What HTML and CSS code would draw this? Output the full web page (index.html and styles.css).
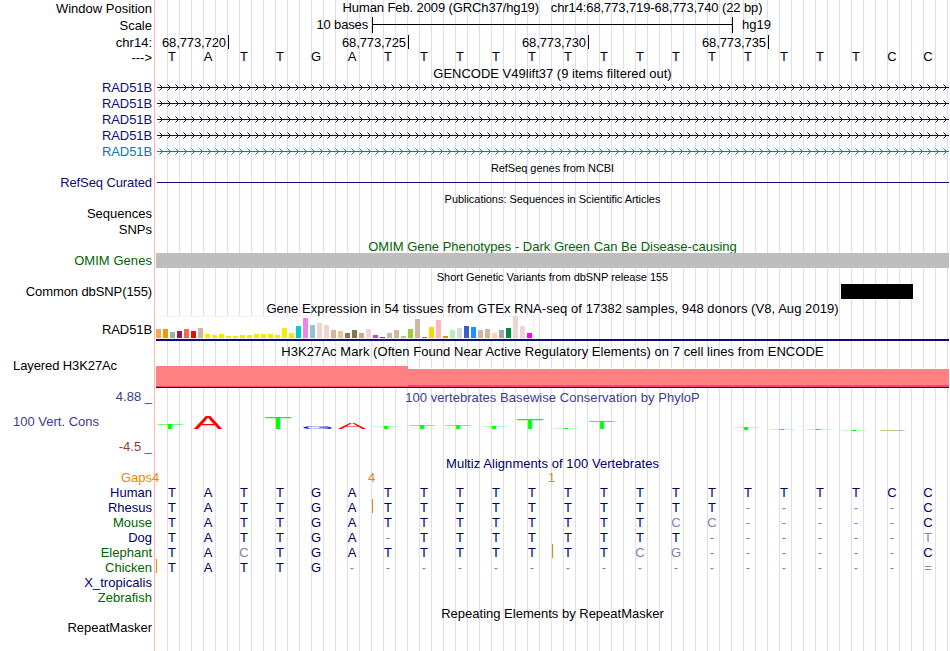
FILE: index.html
```html
<!DOCTYPE html>
<html lang="en">
<head>
  <meta charset="UTF-8" />
  <meta name="viewport" content="width=device-width, initial-scale=1.0" />
  <title>chr14:68,773,719-68,773,740</title>
  <link rel="stylesheet" href="styles.css">
</head>
<body>
  <div class="browser">
    <div class="row tall">
      <div class="label low">Window Position</div>
      <div class="title position"><span>Human Feb. 2009 (GRCh37/hg19)</span><span>chr14:68,773,719-68,773,740 (22 bp)</span></div>
    </div>
    <div class="row tall">
      <div class="label low">Scale</div>
      <div class="scale">
        <span class="scale-size">10 bases</span>
        <span class="ruler"></span>
        <span>hg19</span>
      </div>
    </div>
    <div class="row">
      <div class="label low">chr14:</div>
      <div class="ticks">
        <span>68,773,720</span><span>68,773,725</span><span>68,773,730</span><span>68,773,735</span>
      </div>
    </div>
    <div class="row gene-row">
      <div class="label low">---&gt;</div>
      <div class="seq" data-seq="TATTGATTTTTTTTTTTTTTCC"></div>
    </div>

    <div class="row"><div class="title low">GENCODE V49lift37 (9 items filtered out)</div></div>
    <div class="row gene-row navy"><div class="label tight">RAD51B</div><svg class="gene"></svg></div>
    <div class="row gene-row navy"><div class="label tight">RAD51B</div><svg class="gene"></svg></div>
    <div class="row gene-row navy"><div class="label tight">RAD51B</div><svg class="gene"></svg></div>
    <div class="row gene-row navy"><div class="label tight">RAD51B</div><svg class="gene"></svg></div>
    <div class="row gene-row teal"><div class="label tight">RAD51B</div><svg class="gene"></svg></div>

    <div class="row"><div class="title small">RefSeq genes from NCBI</div></div>
    <div class="row gene-row navy">
      <div class="label tight">RefSeq Curated</div>
      <div class="intron"></div>
    </div>

    <div class="row"><div class="title small">Publications: Sequences in Scientific Articles</div></div>
    <div class="row gene-row"><div class="label">Sequences</div></div>
    <div class="row gene-row"><div class="label">SNPs</div></div>

    <div class="row green"><div class="title low clipped">OMIM Gene Phenotypes - Dark Green Can Be Disease-causing</div></div>
    <div class="row gene-row green">
      <div class="label wide">OMIM Genes</div>
      <div class="block omim"></div>
    </div>

    <div class="row"><div class="title small">Short Genetic Variants from dbSNP release 155</div></div>
    <div class="row gene-row">
      <div class="label tight">Common dbSNP(155)</div>
      <div class="block snp"></div>
    </div>

    <div class="row"><div class="title low wide">Gene Expression in 54 tissues from GTEx RNA-seq of 17382 samples, 948 donors (V8, Aug 2019)</div></div>
    <div class="row gtex-row">
      <div class="label tight">RAD51B</div>
      <div class="gtex"><div class="bars" id="bars"></div></div>
    </div>

    <div class="row"><div class="title low wide">H3K27Ac Mark (Often Found Near Active Regulatory Elements) on 7 cell lines from ENCODE</div></div>
    <div class="row h3k-row">
      <div class="label left tight">Layered H3K27Ac</div>
      <div class="h3k"><div class="signal high"></div><div class="signal"></div></div>
    </div>

    <div class="row cons-row">
      <div class="cons-labels">
        <div class="label blue">4.88 _</div>
        <div class="label left blue">100 Vert. Cons</div>
        <div class="label red">-4.5 _</div>
      </div>
      <div>
        <div class="title low blue wide">100 vertebrates Basewise Conservation by PhyloP</div>
        <svg class="logo" id="logo" width="793" height="45"></svg>
      </div>
    </div>

    <div class="row multiz-title human"><div class="title wide">Multiz Alignments of 100 Vertebrates</div></div>
    <div class="row gaps">
      <div class="label">Gaps</div>
      <div class="seq counts"><span>4</span><span></span><span></span><span></span><span></span><span></span><span>4</span><span></span><span></span><span></span><span></span><span>1</span></div>
    </div>
    <div class="row human"><div class="label">Human</div><div class="seq" data-seq="TATTGATTTTTTTTTTTTTTCC"></div></div>
    <div class="row human"><div class="label">Rhesus</div><div class="seq" data-seq="TATTGA|TTTTTTTTTT-----C"></div></div>
    <div class="row human"><div class="label green">Mouse</div><div class="seq" data-seq="TATTGATTTTTTTTcc-----C"></div></div>
    <div class="row human"><div class="label">Dog</div><div class="seq" data-seq="TATTGA-TTTTTTTT------t"></div></div>
    <div class="row human"><div class="label green">Elephant</div><div class="seq" data-seq="TAcTGATTTTT|TTcg------C"></div></div>
    <div class="row human"><div class="label green">Chicken</div><div class="seq" data-seq="|TATTG----------------="></div></div>
    <div class="row human"><div class="label wide">X_tropicalis</div></div>
    <div class="row human"><div class="label green">Zebrafish</div></div>

    <div class="row"><div class="title low">Repeating Elements by RepeatMasker</div></div>
    <div class="row"><div class="label">RepeatMasker</div></div>
  </div>

  <script>
    const SVG_NS = 'http://www.w3.org/2000/svg';

    // height and colour of each tissue
    const tissues = [
      [9, '#ffa54f'], [9, '#ee9a00'], [6, '#8fbc8f'], [7, '#8b1c62'], [9, '#ee6a50'], [7, '#ff0000'],
      [10, '#cdb79e'], [4, '#eeee00'], [3, '#eeee00'], [4, '#eeee00'], [2, '#eeee00'], [2, '#eeee00'],
      [3, '#eeee00'], [3, '#eeee00'], [4, '#eeee00'], [4, '#eeee00'], [4, '#eeee00'], [3, '#eeee00'],
      [10, '#eeee00'], [5, '#eeee00'], [12, '#00cdcd'], [20, '#ee82ee'], [13, '#9ac0cd'], [15, '#eed5d2'],
      [13, '#eed5d2'], [8, '#cdb79e'], [7, '#eec591'], [5, '#8b7355'], [8, '#8b7355'], [5, '#cdaa7d'],
      [9, '#eed5d2'], [3, '#b452cd'], [1, '#7a378b'], [5, '#cdb79e'], [8, '#cdb79e'], [2, '#cdb79e'],
      [9, '#9acd32'], [19, '#cdb79e'], [1, '#7a67ee'], [11, '#ffd700'], [18, '#ffb6c1'], [2, '#cd9b1d'],
      [8, '#b4eeb4'], [10, '#d9d9d9'], [12, '#3a5fcd'], [11, '#1e90ff'], [8, '#cdb79e'], [9, '#cdb79e'],
      [5, '#ffd39b'], [8, '#a6a6a6'], [10, '#008b45'], [22, '#eed5d2'], [12, '#eed5d2'], [5, '#ff00ff']
    ];

    // column, base, height, offset below the axis
    const scores = [
      [0, 'T', 5, 0], [1, 'A', 13, 0], [3, 'T', 11, 0], [4, 'G', 3, 0], [5, 'A', 6, 0], [6, 'T', 2, 0],
      [7, 'T', 4, 0], [8, 'T', 4, 0], [9, 'T', 2, 0], [10, 'T', 10, 0], [11, 'T', 1, 0], [12, 'T', 7, 0],
      [16, 'T', 2, 1], [17, 'T', 1, 1], [18, 'T', 1, 1], [19, 'T', 1, 2], [20, 'C', 1, 2]
    ];

    // horizontal scale and centre of each base letter
    const shapes = {
      T: [0.455, 14],
      A: [0.43, 16],
      G: [0.43, 18],
      C: [0.42, 17]
    };

    const addSvg = (parent, tag, attrs) => {
      const el = document.createElementNS(SVG_NS, tag);
      Object.keys(attrs).forEach(key => el.setAttribute(key, attrs[key]));
      parent.appendChild(el);
      return el;
    };

    const drawSequence = row => {
      let insert = false;
      for (let char of row.dataset.seq) {
        if (char === '|') {
          insert = true;
          continue;
        }
        const cell = document.createElement('span');
        cell.textContent = char.toUpperCase();
        if (/[a-z=-]/.test(char)) cell.classList.add('weak');
        if (insert) cell.classList.add('insert');
        insert = false;
        row.appendChild(cell);
      }
    };

    const drawGene = svg => {
      svg.setAttribute('width', 793);
      svg.setAttribute('height', 16);
      addSvg(svg, 'path', { d: 'M1 7.5H793' });
      let d = '';
      for (let x = 3.5; x < 793; x += 8) d += `M${x} 4.5l3 3l-3 3`;
      addSvg(svg, 'path', { d: d });
    };

    const drawBars = () => {
      const bars = document.getElementById('bars');
      tissues.forEach(([height, color]) => {
        const bar = document.createElement('i');
        bar.style.height = height + 'px';
        bar.style.background = color;
        bars.appendChild(bar);
      });
    };

    const drawLogo = () => {
      const logo = document.getElementById('logo');
      scores.forEach(([col, base, height, drop]) => {
        const [sx, center] = shapes[base];
        const text = addSvg(logo, 'text', {
          class: 'base-' + base,
          transform: `translate(${center + col * 36} ${24 + drop}) scale(${sx} ${height / 69})`
        });
        text.textContent = base;
      });
    };

    document.querySelectorAll('[data-seq]').forEach(drawSequence);
    document.querySelectorAll('.gene').forEach(drawGene);
    drawBars();
    drawLogo();
  </script>
</body>
</html>
```
FILE: styles.css
```css
:root {
  --navy: #0c0c78;
  --teal: #0c78b4;
  --green: #006400;
  --species: #000064;
  --blue: #3c3c8c;
  --orange: #e68a00;
  --guide: #dcdcff;
}

body {
  margin: 0;
  background: #fff;
  color: #000;
  font-family: "Liberation Sans", Arial, sans-serif;
  font-size: 13px;
  line-height: 15px;
}

.browser {
  width: 950px;
  height: 651px;
  overflow: hidden;
  background:
    linear-gradient(#ffb4b4, #ffb4b4) 154px 0 / 1px 100% no-repeat,
    repeating-linear-gradient(to right, transparent 0 11px, var(--guide) 11px 12px) 156px 0 / 793px 100% no-repeat;
}

.row {
  display: grid;
  grid-template-columns: 156px 793px;
  height: 15px;
}

.tall {
  height: 17px;
}

.gene-row {
  height: 16px;
}

.label {
  padding-right: 4px;
  text-align: right;
  white-space: nowrap;
}

.label.left {
  padding-left: 13px;
  text-align: left;
}

.title {
  grid-column: 2;
  text-align: center;
  white-space: nowrap;
}

.low {
  padding-top: 1px;
}

/* descenders stop at the block below */
.clipped {
  height: 14px;
  overflow: hidden;
}

.small {
  padding-top: 1px;
  font-size: 11px;
  letter-spacing: -0.04px;
}

.tight {
  letter-spacing: -0.1px;
}

.wide {
  letter-spacing: 0.055px;
}

.navy { color: var(--navy); }
.teal { color: var(--teal); }
.green { color: var(--green); }
.blue { color: var(--blue); }
.red { color: #8c3c3c; }
.human { color: var(--species); }
.gaps { color: var(--orange); }

.position {
  display: flex;
  justify-content: center;
  gap: 12px;
  letter-spacing: -0.11px;
}

.scale {
  display: flex;
}

.scale-size {
  width: 212px;
  margin-right: 4px;
  letter-spacing: -0.15px;
  text-align: right;
}

.ruler {
  width: 359px;
  height: 16px;
  margin-right: 9px;
  border: solid #000;
  border-width: 0 1px;
  background: linear-gradient(#000, #000) 0 7px / 100% 1px no-repeat;
}

.ticks {
  display: grid;
  grid-template-columns: 73px 180px 180px 180px;
  height: 14px;
  padding-top: 1px;
  letter-spacing: -0.1px;
}

.ticks span {
  height: 14px;
  padding-right: 2px;
  border-right: 1px solid #000;
  text-align: right;
}

/* 22 bases, 36px each */
.seq {
  display: grid;
  grid-template-columns: repeat(22, 36px);
  margin-left: -2px;
  text-align: center;
}

.counts {
  margin-left: -4px;
  text-align: left;
}

.weak {
  color: #8282aa;
}

.insert {
  position: relative;
}

.insert::before {
  content: '';
  position: absolute;
  top: -1px;
  left: 2px;
  width: 1px;
  height: 14px;
  background: var(--orange);
}

.gene {
  display: block;
  fill: none;
  stroke: currentColor;
}

.intron {
  height: 1px;
  margin: 7px 0 0 1px;
  background: var(--navy);
}

.block {
  height: 15px;
}

.omim {
  background: #bebebe;
}

.snp {
  width: 72px;
  margin-left: 685px;
  background: #000;
}

.gtex-row {
  height: 28px;
}

.gtex-row .label {
  padding-top: 7px;
}

.gtex {
  height: 23px;
  padding-top: 1px;
  border-bottom: 2px solid var(--navy);
}

.bars {
  display: flex;
  align-items: flex-end;
  gap: 2px;
  width: 378px;
  height: 22px;
  padding-bottom: 1px;
  background: #fff;
  box-shadow: inset 0 0 0 1px #f2f2f2;
}

.bars i {
  width: 5px;
}

.h3k-row {
  height: 31px;
}

.h3k {
  display: flex;
  align-items: flex-end;
  height: 30px;
}

.signal {
  flex: 1;
  box-sizing: border-box;
  height: 19px;
  border-bottom: 1px solid #280014;
  background: linear-gradient(#ff8080 16px, #ff4070 16px);
}

.signal.high {
  flex: 0 0 252px;
  height: 22px;
  background: linear-gradient(#ff8080 20px, #ff4070 20px);
}

.cons-row {
  height: 67px;
}

.cons-labels {
  display: flex;
  flex-direction: column;
  gap: 10px;
}

.logo {
  display: block;
  font-size: 100px;
  text-anchor: middle;
}

.base-T { fill: #00ff00; }
.base-A { fill: #ff0000; }
.base-G { fill: #0000ff; }
.base-C { fill: #888800; }

.multiz-title {
  height: 14px;
}
```
